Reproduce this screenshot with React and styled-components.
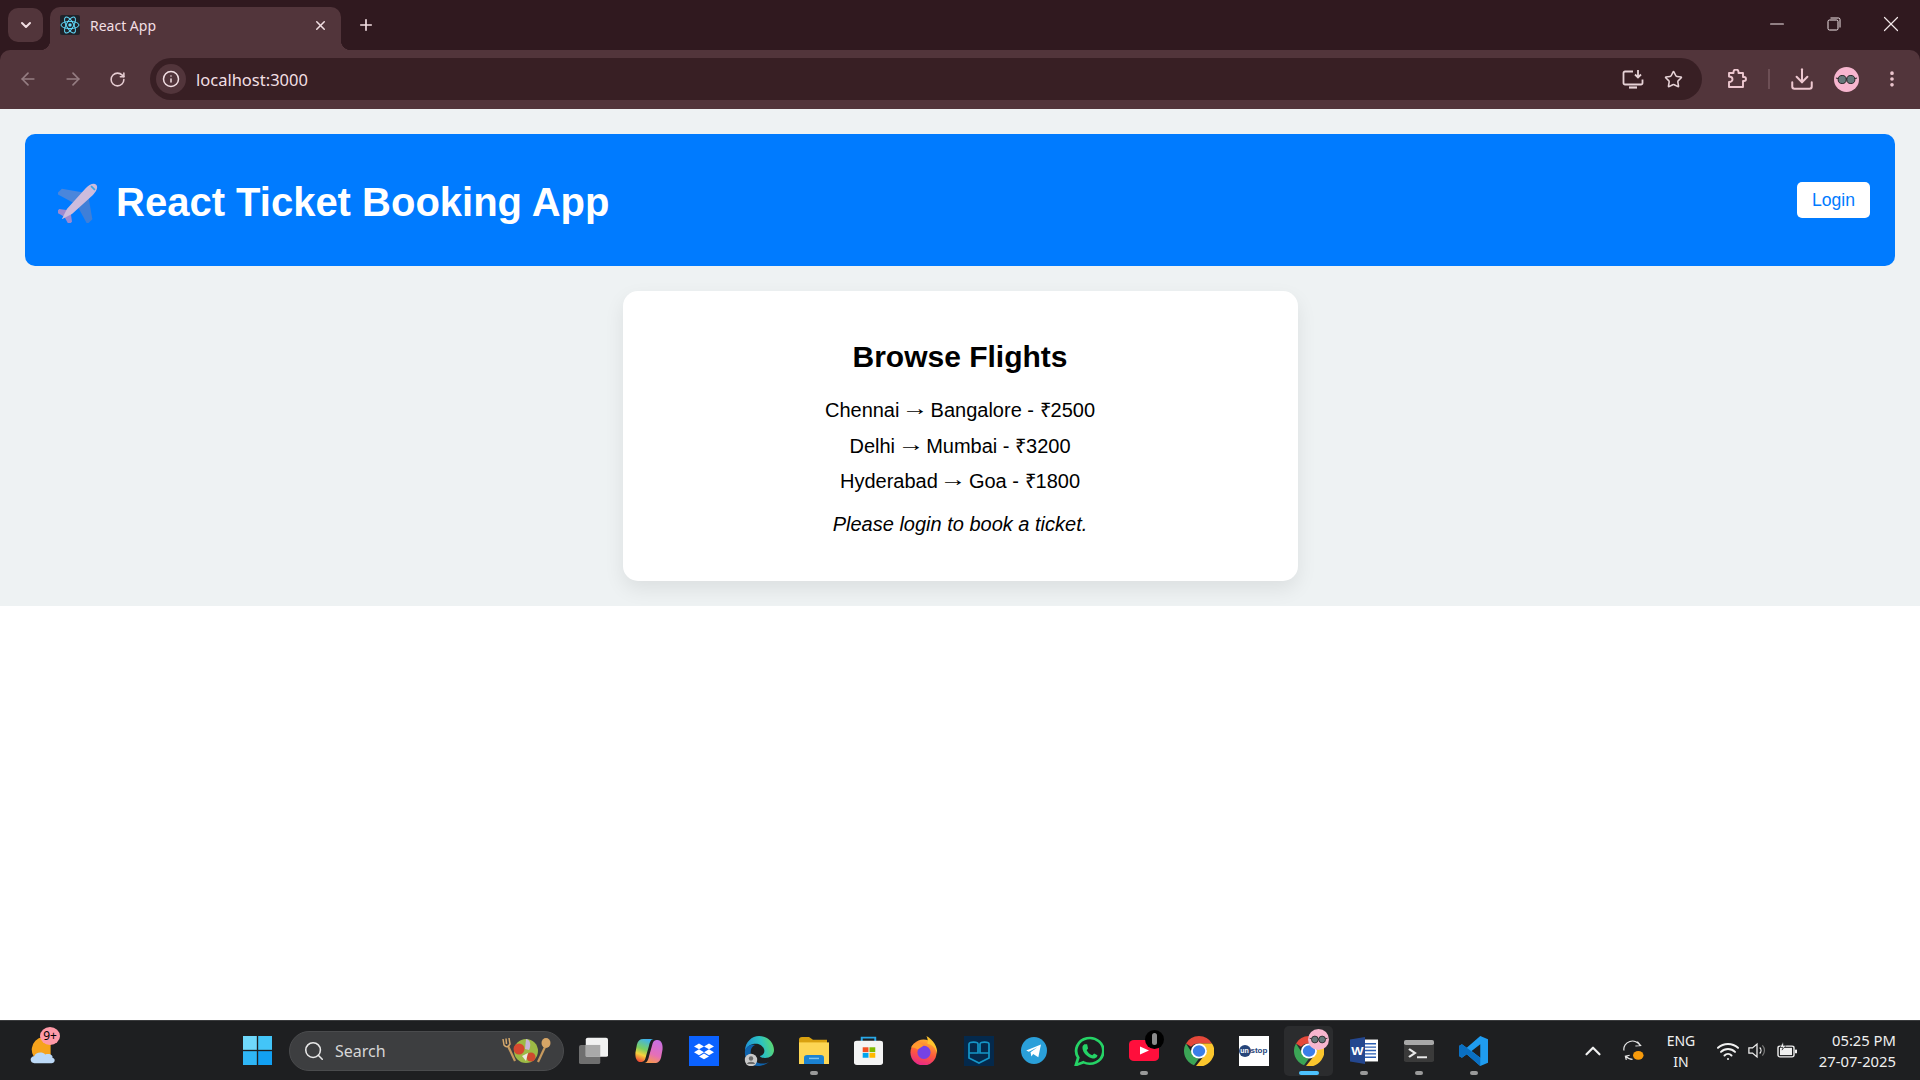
import React from 'react';
import styled, { createGlobalStyle } from 'styled-components';
import {
    ArrowLeft, ArrowRight, RotateCw, Info, Star, Download,
    EllipsisVertical, Minus, X, Plus, ChevronDown, ChevronUp, Search, Wifi,
} from 'lucide-react';

const flights = [
    { from: 'Chennai', to: 'Bangalore', price: '₹2500' },
    { from: 'Delhi', to: 'Mumbai', price: '₹3200' },
    { from: 'Hyderabad', to: 'Goa', price: '₹1800' },
];

const ReactLogo = () => (
    <svg width="20" height="20" viewBox="0 0 20 20" fill="none" stroke="#61dafb" strokeWidth="1">
        <rect width="20" height="20" rx="2" fill="#20232a" stroke="none" />
        <ellipse cx="10" cy="10" rx="9" ry="3.6" />
        <ellipse cx="10" cy="10" rx="9" ry="3.6" transform="rotate(60 10 10)" />
        <ellipse cx="10" cy="10" rx="9" ry="3.6" transform="rotate(120 10 10)" />
        <circle cx="10" cy="10" r="1.7" fill="#61dafb" stroke="none" />
    </svg>
);

const Plane = () => (
    <svg width="42" height="42" viewBox="0 0 42 42">
        <g transform="rotate(45 21 21) translate(21 21) scale(.9) translate(-21 -21)">
            <path d="M17 10 L-3 24 L-3 32 L17 26 Z" fill="#4a86dc" />
            <path d="M25 10 L45 24 L45 32 L25 26 Z" fill="#3f7fd8" />
            <path d="M19 36 L11 42 L11 47 L21 44 L31 47 L31 42 L23 36 Z" fill="#9d8ad0" />
            <path d="M21 -6 C25 -6 26.5 0 26.5 5 L25 36 L21 48 L17 36 L15.5 5 C15.5 0 17 -6 21 -6 Z" fill="#cdbcdd" />
            <path d="M18 -1 L24 -1" stroke="#38a7e8" strokeWidth="1.8" />
        </g>
    </svg>
);

const Avatar = ({ size }) => (
    <svg width={size} height={size} viewBox="0 0 26 26">
        <circle cx="13" cy="13" r="13" fill="#f7b6cf" />
        <circle cx="8.5" cy="13" r="4.2" fill="#66777a" stroke="#222" strokeWidth="1" />
        <circle cx="17.5" cy="13" r="4.2" fill="#66777a" stroke="#222" strokeWidth="1" />
        <path d="M12.5 12.5 h1 M2 11.5 l2.5 .5 M24 11.5 l-2.5 .5" stroke="#222" strokeWidth="1" />
    </svg>
);

const MonitorIcon = () => (
    <svg width="22" height="20" viewBox="0 0 22 20" fill="none" stroke="currentColor" strokeWidth="1.8">
        <path d="M11 2.5 H3 A1.5 1.5 0 0 0 1.5 4 V14 A1.5 1.5 0 0 0 3 15.5 H19 A1.5 1.5 0 0 0 20.5 14 V10.5" />
        <path d="M7 18.5 H15" strokeWidth="2.2" />
        <path d="M16 1 V8.5 M13 5.5 L16 8.5 L19 5.5" />
    </svg>
);

const PuzzleIcon = () => (
    <svg width="20" height="20" viewBox="0 0 20 20" fill="none" stroke="currentColor" strokeWidth="1.9" strokeLinejoin="round">
        <path d="M2 4 H6.5 V3 A2.5 2.5 0 0 1 11.5 3 V4 H16 V8 H17 A2 2 0 0 1 17 12 H16 V18 H2 V13 C4.5 13 5.5 11.5 5.5 10.2 C5.5 9 4.5 7.5 2 7.5 Z" />
    </svg>
);

const WeatherIcon = () => (
    <svg width="27" height="27" viewBox="0 0 30 34" preserveAspectRatio="none">
        <path d="M24 2 A14 16 0 0 0 5 24 L24 24 Z" fill="#f6a31c" />
        <path d="M6 33 C1 33 0 25 6 24 C7 19 15 18 18 22 C23 20 27 23 26 26 C30 27 29 33 25 33 Z" fill="#bcd9f7" />
    </svg>
);

const WindowsIcon = () => (
    <svg width="29" height="29" viewBox="0 0 30 30">
        <rect width="14.3" height="14.3" fill="#6fd8fb" />
        <rect x="15.7" width="14.3" height="14.3" fill="#43c5f8" />
        <rect y="15.7" width="14.3" height="14.3" fill="#2fb6f6" />
        <rect x="15.7" y="15.7" width="14.3" height="14.3" fill="#12a0f3" />
    </svg>
);

const SaladIcon = () => (
    <svg width="50" height="25" viewBox="0 0 50 25">
        <path d="M7 8 L14 23" stroke="#c79a5e" strokeWidth="2.2" />
        <path d="M2 1 L3 7 Q6 11 9 6 L8 0 M5 0.5 L5.5 6" fill="none" stroke="#d3a76c" strokeWidth="1.5" />
        <path d="M44 9 L37 24" stroke="#c79a5e" strokeWidth="2.2" />
        <ellipse cx="45" cy="5" rx="4.5" ry="5" fill="#d6a566" />
        <circle cx="25" cy="13" r="12" fill="#9dba45" />
        <circle cx="18" cy="11" r="5.5" fill="#d5482f" />
        <circle cx="30" cy="19" r="4.5" fill="#cf4a2e" />
        <path d="M25 1 C30 2 30 8 28 12 L24 11 Z" fill="#c7b6d8" />
        <path d="M21 18 L27 15 L25 23 Z" fill="#ece8e0" />
    </svg>
);

const TaskViewIcon = () => (
    <svg width="29" height="27" viewBox="0 0 30 34" preserveAspectRatio="none">
        <rect x="0" y="10" width="22" height="24" rx="2" fill="#6f6f6f" />
        <rect x="7" y="1" width="23" height="24" rx="2" fill="#f1f1f1" />
        <rect x="7" y="10" width="15" height="15" fill="#a9a9a9" />
    </svg>
);

const CopilotIcon = () => (
    <svg width="28" height="26" viewBox="0 0 30 27" preserveAspectRatio="none">
        <defs>
            <linearGradient id="copilotLeft" x1="0.6" y1="0" x2="0.3" y2="1">
                <stop offset="0" stopColor="#3fb2ec" />
                <stop offset="0.45" stopColor="#7ccf5e" />
                <stop offset="0.7" stopColor="#f6d23d" />
                <stop offset="1" stopColor="#ee4a36" />
            </linearGradient>
            <linearGradient id="copilotRight" x1="0.6" y1="0" x2="0.3" y2="1">
                <stop offset="0" stopColor="#c86fe0" />
                <stop offset="0.6" stopColor="#e56fb8" />
                <stop offset="1" stopColor="#f79a4c" />
            </linearGradient>
        </defs>
        <path d="M9 1 C5 1 3 3 2 7 L.5 15 C0 20 1.5 25 6 25 C9 25 10.5 24 11.5 20 L15 8 C16 4 17 1 20 1 Z" fill="url(#copilotLeft)" />
        <path d="M21 26 C25 26 27 24 28 20 L29.5 12 C30 7 28.5 2 24 2 C21 2 19.5 3 18.5 7 L15 19 C14 23 13 26 10 26 Z" fill="url(#copilotRight)" />
    </svg>
);

const DropboxIcon = () => (
    <svg width="30" height="30" viewBox="0 0 30 36" preserveAspectRatio="none">
        <rect width="30" height="36" fill="#0b62ff" />
        <path d="M10 9 L15 12.5 L10 16 L5 12.5 Z M20 9 L25 12.5 L20 16 L15 12.5 Z M10 16 L15 19.5 L10 23 L5 19.5 Z M20 16 L25 19.5 L20 23 L15 19.5 Z M15 21 L20 24.5 L15 28 L10 24.5 Z" fill="#fff" />
    </svg>
);

const EdgeIcon = () => (
    <svg width="30" height="30" viewBox="0 0 30 30">
        <defs>
            <linearGradient id="edgeTop" x1="0" y1="0.6" x2="1" y2="0.4">
                <stop offset="0" stopColor="#1f8fd8" />
                <stop offset="0.6" stopColor="#2cc3c0" />
                <stop offset="1" stopColor="#5fd86c" />
            </linearGradient>
        </defs>
        <path d="M1 15 C1 6 8 0 15 0 C24 0 30 7 30 14 C30 19 26 22 21 22 C18 22 16 21 16 20 C20 19 21 16 20 13 C18 8 13 7 9 8 C5 9 2 12 1 15 Z" fill="url(#edgeTop)" />
        <path d="M1 15 C2 10 7 8 11 9 C7 11 6 15 7 19 C9 26 17 30 25 26 C21 29 17 30 14 30 C6 30 0 24 1 15 Z" fill="#0f63ad" />
        <circle cx="7" cy="24" r="6.2" fill="#c9c9c9" />
        <circle cx="7" cy="22.5" r="2.2" fill="#6a6a6a" />
        <path d="M3 28 C3.5 25 10.5 25 11 28 Z" fill="#6a6a6a" />
    </svg>
);

const FolderIcon = () => (
    <svg width="30" height="27" viewBox="0 0 30 30" preserveAspectRatio="none">
        <path d="M0 3 C0 1 1 0 3 0 L10 0 L14 3 L28 3 L28 8 L0 8 Z" fill="#d9a10f" />
        <rect y="6" width="30" height="24" fill="#fdd654" />
        <path d="M5 30 L5 23 C5 21 6 20 8 20 L22 20 C24 20 25 21 25 23 L25 30 Z" fill="#1b82d2" />
        <rect x="10" y="23" width="10" height="1.6" fill="#7fc4f0" />
    </svg>
);

const StoreIcon = () => (
    <svg width="29" height="29" viewBox="0 0 30 36" preserveAspectRatio="none">
        <path d="M8 8 V2 H22 V8" fill="none" stroke="#29a8e8" strokeWidth="2" />
        <rect y="6" width="30" height="30" rx="3" fill="#f4f4f4" />
        <rect x="9" y="14" width="6" height="6" fill="#f25022" />
        <rect x="16" y="14" width="6" height="6" fill="#7fba00" />
        <rect x="9" y="21" width="6" height="6" fill="#00a4ef" />
        <rect x="16" y="21" width="6" height="6" fill="#ffb900" />
    </svg>
);

const FirefoxIcon = () => (
    <svg width="29" height="29" viewBox="0 0 30 30">
        <defs>
            <linearGradient id="foxBody" x1="0.7" y1="0" x2="0.4" y2="1">
                <stop offset="0" stopColor="#ffb52e" />
                <stop offset="0.55" stopColor="#ff5a3c" />
                <stop offset="1" stopColor="#e8268a" />
            </linearGradient>
        </defs>
        <circle cx="15" cy="17" r="13.5" fill="url(#foxBody)" />
        <path d="M18 0 C25 4 30 11 29 19 C28 12 24 9 19 8 C20 5 19 2 18 0 Z" fill="#ffc42e" />
        <circle cx="15.5" cy="17" r="6.8" fill="#7542e5" />
        <path d="M2 12 C5 6 11 6 15 10 L9 14 C6 12 4 12 2 12 Z" fill="#ff9a2e" />
    </svg>
);

const PwIcon = () => (
    <svg width="30" height="30" viewBox="0 0 30 30">
        <rect width="30" height="30" fill="#04294c" />
        <path d="M5 17 V8 C5 5.5 14 5.5 14 8 V17 H5 V22 L15 27 L25 22 V17 H16 V8 C16 5.5 25 5.5 25 8 V17" fill="none" stroke="#1596c8" strokeWidth="1.7" />
    </svg>
);

const TelegramIcon = () => (
    <svg width="26" height="27" viewBox="0 0 30 32" preserveAspectRatio="none">
        <ellipse cx="15" cy="16" rx="15" ry="16" fill="#2a9fd9" />
        <path d="M6 16 L23 9 L20 24 L14 20 L12 23 L11 18 L19 12 L9 17.5 Z" fill="#fff" />
    </svg>
);

const WhatsappIcon = () => (
    <svg width="30" height="30" viewBox="0 0 32 36" preserveAspectRatio="none">
        <path d="M2 35 L4.5 26 A14.5 15.5 0 1 1 10 31.5 Z" fill="none" stroke="#25d366" strokeWidth="3" />
        <path d="M11 10 L14 10 L15 15 L13.5 17 C15 20 17 22 19.5 23 L21.5 21 L25 23 C25 26 22 27 20 27 C15 26 9 20 9 14 C9 12 10 11 11 10 Z" fill="#25d366" />
    </svg>
);

const YoutubeIcon = () => (
    <svg width="30" height="21" viewBox="0 0 30 26" preserveAspectRatio="none">
        <rect width="30" height="26" rx="5" fill="#ff0f3c" />
        <path d="M11 8 L20 13 L11 18 Z" fill="#fff" />
    </svg>
);

const ChromeIcon = () => (
    <svg width="30" height="30" viewBox="0 0 30 36" preserveAspectRatio="none">
        <path d="M15 0 A15 18 0 0 1 28 9 L15 9 A9 9 0 0 0 7 13 L2 9 A15 18 0 0 1 15 0 Z" fill="#e5483a" />
        <path d="M2 9 L8 20 A8 8 0 0 0 15 27 L10 35 A15 18 0 0 1 2 9 Z" fill="#3ba556" />
        <path d="M28 9 A15 18 0 0 1 12 36 L20 24 A8 8 0 0 0 21 13 L15 9 Z" fill="#fbc62d" />
        <ellipse cx="15" cy="18" rx="8" ry="9" fill="#fff" />
        <ellipse cx="15" cy="18" rx="6.2" ry="7" fill="#3a7ee8" />
    </svg>
);

const WordIcon = () => (
    <svg width="28" height="27" viewBox="0 0 28 32" preserveAspectRatio="none">
        <rect x="8" y="3" width="20" height="26" fill="#fff" />
        <path d="M15 8 H26 M15 12 H26 M15 16 H26 M15 20 H26 M15 24 H26" stroke="#2b5fb3" strokeWidth="1.6" />
        <path d="M0 3 L15 0 V32 L0 29 Z" fill="#24478f" />
        <text x="7.5" y="21" fontSize="13" fontWeight="700" fill="#fff" textAnchor="middle" fontFamily="Liberation Sans, sans-serif">W</text>
    </svg>
);

const TerminalIcon = () => (
    <svg width="30" height="22" viewBox="0 0 30 27" preserveAspectRatio="none">
        <rect width="30" height="27" rx="2" fill="#3a3a3a" />
        <rect width="30" height="6" rx="2" fill="#a8a8a8" />
        <path d="M5 11 L11 16 L5 21" fill="none" stroke="#e8e8e8" strokeWidth="2.4" />
        <rect x="13" y="20" width="10" height="2.4" fill="#e8e8e8" />
    </svg>
);

const VscodeIcon = () => (
    <svg width="29" height="30" viewBox="0 0 30 36" preserveAspectRatio="none">
        <path d="M22 0 L30 4 V32 L22 36 L8 22 L3 26 L0 24 V12 L3 10 L8 14 Z M22 10 L13 18 L22 26 Z" fill="#1f9cf0" />
        <path d="M0 12 L3 10 L22 26 V36 L8 22 L3 26 L0 24 Z" fill="#0a6fc2" />
    </svg>
);

const SyncIcon = () => (
    <svg width="21" height="21" viewBox="0 0 22 26" fill="none" stroke="#e6e6e6" strokeWidth="1.3" preserveAspectRatio="none">
        <path d="M1 13 A9 10 0 0 1 18 7 M15 2 L18.5 7 L13 7.5" />
        <path d="M10 24 A9 10 0 0 1 3 20 M7 19 L2.5 20 L3.5 24.5" />
        <circle cx="16" cy="19" r="5.5" fill="#f79a0b" stroke="none" />
    </svg>
);

const SpeakerIcon = () => (
    <svg width="18" height="17" viewBox="0 0 20 20" fill="none" stroke="#f0f0f0" strokeWidth="1.4" preserveAspectRatio="none">
        <path d="M1 7 H5 L10 2.5 V17.5 L5 13 H1 Z" />
        <path d="M13 6.5 A5 5 0 0 1 13 13.5" />
        <path d="M16 4 A9 9 0 0 1 16 16" stroke="#777" />
    </svg>
);

const BatteryIcon = () => (
    <svg width="20" height="18" viewBox="0 0 20 20" preserveAspectRatio="none">
        <rect x="1" y="4.5" width="16" height="12" rx="2" fill="none" stroke="#f0f0f0" strokeWidth="1.4" />
        <rect x="3" y="6.5" width="12" height="8" fill="#f0f0f0" />
        <rect x="18" y="8.5" width="2" height="4" fill="#f0f0f0" />
        <path d="M6 0 L3 6 H6 L5 9 L9 4 H6.5 Z" fill="#f0f0f0" stroke="#1e1f21" strokeWidth=".6" />
    </svg>
);

const UnstopIcon = () => (
    <UnstopTile>
        <UnstopMark>un</UnstopMark>stop
    </UnstopTile>
);

const apps = [
    { Icon: TaskViewIcon },
    { Icon: CopilotIcon },
    { Icon: DropboxIcon },
    { Icon: EdgeIcon },
    { Icon: FolderIcon, running: true },
    { Icon: StoreIcon },
    { Icon: FirefoxIcon },
    { Icon: PwIcon },
    { Icon: TelegramIcon },
    { Icon: WhatsappIcon },
    { Icon: YoutubeIcon, running: true, notify: true },
    { Icon: ChromeIcon },
    { Icon: UnstopIcon },
    { Icon: ChromeIcon, active: true },
    { Icon: WordIcon, running: true },
    { Icon: TerminalIcon, running: true },
    { Icon: VscodeIcon, running: true },
];

function App() {
    return (
        <>
            <GlobalStyle />
            <Screen>
                <Browser>
                    <TabStrip>
                        <TabSearch><ChevronDown size={16} strokeWidth={3} /></TabSearch>
                        <Tab>
                            <ReactLogo />
                            <TabTitle>React App</TabTitle>
                            <TabClose><X size={15} strokeWidth={2.4} /></TabClose>
                        </Tab>
                        <NewTab><Plus size={18} strokeWidth={2.2} /></NewTab>
                        <WindowControls>
                            <WindowButton><Minus size={22} strokeWidth={1.2} /></WindowButton>
                            <WindowButton>
                                <svg width="14" height="14" viewBox="0 0 14 14" fill="none" stroke="#f2e7e9" strokeWidth="1">
                                    <rect x="1" y="3" width="10" height="10" rx="1.5" />
                                    <path d="M3.5 1 H11.5 A1.5 1.5 0 0 1 13 2.5 V10.5" />
                                </svg>
                            </WindowButton>
                            <WindowButton><X size={26} strokeWidth={1.1} /></WindowButton>
                        </WindowControls>
                    </TabStrip>
                    <Toolbar>
                        <NavButton $dim><ArrowLeft size={20} /></NavButton>
                        <NavButton $dim><ArrowRight size={20} /></NavButton>
                        <NavButton><RotateCw size={17} strokeWidth={2.2} /></NavButton>
                        <Omnibox>
                            <InfoChip><Info size={18} /></InfoChip>
                            <Url>localhost:3000</Url>
                            <OmniAction><MonitorIcon /></OmniAction>
                            <OmniAction><Star size={19} strokeWidth={2} /></OmniAction>
                        </Omnibox>
                        <ToolButton><PuzzleIcon /></ToolButton>
                        <ToolDivider />
                        <ToolButton><Download size={26} strokeWidth={1.85} /></ToolButton>
                        <ToolButton><Avatar size={25} /></ToolButton>
                        <ToolButton><EllipsisVertical size={20} strokeWidth={2.4} /></ToolButton>
                    </Toolbar>
                </Browser>

                <Viewport>
                    <Site>
                        <Header>
                            <Title><Plane /> React Ticket Booking App</Title>
                            <LoginButton>Login</LoginButton>
                        </Header>
                        <Card>
                            <CardTitle>Browse Flights</CardTitle>
                            {flights.map(item => (
                                <Flight key={item.from}>
                                    {item.from} <Arrow>→</Arrow> {item.to} - {item.price}
                                </Flight>
                            ))}
                            <Hint>Please login to book a ticket.</Hint>
                        </Card>
                    </Site>
                </Viewport>

                <Taskbar>
                    <Weather>
                        <WeatherIcon />
                        <WeatherBadge>9+</WeatherBadge>
                    </Weather>
                    <AppSlot><WindowsIcon /></AppSlot>
                    <SearchBox>
                        <Search size={22} strokeWidth={1.7} color="#e8e8e8" />
                        <SearchLabel>Search</SearchLabel>
                        <SaladIcon />
                    </SearchBox>
                    <Apps>
                        {apps.map((app, i) => (
                            <AppSlot key={i} $active={app.active}>
                                <app.Icon />
                                {app.notify && <NotifyDot />}
                                {app.active && <AvatarBadge><Avatar size={21} /></AvatarBadge>}
                                {(app.running || app.active) && <Running $active={app.active} />}
                            </AppSlot>
                        ))}
                    </Apps>
                    <Tray>
                        <TraySlot $w={40}><ChevronUp size={26} strokeWidth={2} /></TraySlot>
                        <TraySlot $w={40}><SyncIcon /></TraySlot>
                        <Lang><span>ENG</span><span>IN</span></Lang>
                        <TraySlot $w={29}><Wifi size={24} strokeWidth={2} /></TraySlot>
                        <TraySlot $w={29}><SpeakerIcon /></TraySlot>
                        <TraySlot $w={32}><BatteryIcon /></TraySlot>
                        <Clock><span>05:25 PM</span><span>27-07-2025</span></Clock>
                    </Tray>
                </Taskbar>
            </Screen>
        </>
    );
}

export default App;

const GlobalStyle = createGlobalStyle`
    * {
        box-sizing: border-box;
    }

    body {
        margin: 0;
        background: #fff;
        font-family: "Liberation Sans", Arial, sans-serif;
    }
`;

const Screen = styled.div`
    display: flex;
    flex-direction: column;
    width: 1920px;
    height: 1080px;
    overflow: hidden;
`;

const Browser = styled.div`
    background-color: #30191f;
    font-family: "Noto Sans", sans-serif;
    color: #f2dfe3;
`;

const TabStrip = styled.div`
    display: flex;
    align-items: flex-end;
    height: 50px;
    padding-left: 8px;
`;

const TabSearch = styled.div`
    display: flex;
    align-items: center;
    justify-content: center;
    align-self: flex-start;
    width: 35px;
    height: 34px;
    margin-top: 8px;
    border-radius: 10px;
    background-color: #52353b;
`;

const Tab = styled.div`
    position: relative;
    display: flex;
    align-items: center;
    width: 291px;
    height: 43px;
    margin-left: 7px;
    padding: 0 13px 7px 10px;
    border-radius: 10px 10px 0 0;
    background-color: #52353b;

    &::before,
    &::after {
        content: '';
        position: absolute;
        bottom: 0;
        width: 10px;
        height: 10px;
    }

    &::before {
        left: -10px;
        background: radial-gradient(circle at 0 0, transparent 10px, #52353b 10.5px);
    }

    &::after {
        right: -10px;
        background: radial-gradient(circle at 100% 0, transparent 10px, #52353b 10.5px);
    }
`;

const TabTitle = styled.span`
    flex: 1;
    margin-left: 10px;
    font-size: 14px;
`;

const TabClose = styled.span`
    display: flex;
`;

const NewTab = styled.div`
    display: flex;
    align-self: flex-start;
    margin: 16px 0 0 16px;
`;

const WindowControls = styled.div`
    display: flex;
    align-self: flex-start;
    margin-left: auto;
    padding-right: 1px;
`;

const WindowButton = styled.div`
    display: flex;
    align-items: center;
    justify-content: center;
    width: 57px;
    height: 48px;
    color: #f2e7e9;
`;

const Toolbar = styled.div`
    display: flex;
    align-items: center;
    height: 59px;
    padding: 0 6px 1px 5px;
    border-radius: 10px 10px 0 0;
    background-color: #52353b;
`;

const NavButton = styled.div`
    display: flex;
    align-items: center;
    justify-content: center;
    width: 45px;
    height: 36px;
    color: ${props => props.$dim ? '#957d82' : '#e6cdd2'};
`;

const Omnibox = styled.div`
    display: flex;
    align-items: center;
    flex: 1;
    height: 42px;
    margin: 0 12px 0 10px;
    padding: 0 8px 0 6px;
    border-radius: 21px;
    background-color: #381f24;
`;

const InfoChip = styled.div`
    display: flex;
    align-items: center;
    justify-content: center;
    width: 30px;
    height: 30px;
    border-radius: 50%;
    background-color: #52353b;
    color: #f2dfe3;
`;

const Url = styled.span`
    flex: 1;
    margin-left: 10px;
    font-size: 16.5px;
`;

const OmniAction = styled.div`
    display: flex;
    align-items: center;
    justify-content: center;
    width: 41px;
    color: #e6d2d6;
`;

const ToolButton = styled.div`
    display: flex;
    align-items: center;
    justify-content: center;
    width: 45px;
    height: 36px;
    color: #edc7cf;
`;

const ToolDivider = styled.div`
    width: 2px;
    height: 20px;
    margin: 0 9px;
    background-color: #6d4f55;
`;

const Viewport = styled.main`
    flex: 1;
    background-color: #fff;
`;

const Site = styled.div`
    padding: 25px;
    background-color: #eef2f3;
`;

const Header = styled.header`
    display: flex;
    align-items: center;
    justify-content: space-between;
    height: 132px;
    padding: 0 25px 0 33px;
    border-radius: 10px;
    background-color: #007bff;
    color: #fff;
`;

const Title = styled.h1`
    display: flex;
    align-items: center;
    gap: 16px;
    margin: 4px 0 0;
    font-size: 40px;
`;

const LoginButton = styled.button`
    height: 36px;
    padding: 0 15px;
    border: none;
    border-radius: 5px;
    background-color: #fff;
    color: #007bff;
    font-family: inherit;
    font-size: 17.6px;
    cursor: pointer;
`;

const Card = styled.section`
    width: 675px;
    height: 290px;
    margin: 25px auto 0;
    padding: 48px 30px 0;
    border-radius: 15px;
    background-color: #fff;
    box-shadow: 0 8px 20px rgba(0, 0, 0, .08);
    text-align: center;
    color: #000;
`;

const CardTitle = styled.h2`
    margin: 0 0 18px;
    font-size: 30px;
    line-height: 36px;
`;

const Flight = styled.p`
    margin: 0;
    font-size: 20px;
    line-height: 35.5px;
`;

const Arrow = styled.span`
    display: inline-block;
    transform: translateY(-2px) scaleX(1.35);
`;

const Hint = styled.p`
    margin: 7px 0 0;
    font-size: 20px;
    line-height: 34px;
    font-style: italic;
`;

const Taskbar = styled.footer`
    display: flex;
    align-items: center;
    height: 60px;
    border-top: 1px solid #3a3b3d;
    background-color: #1e1f21;
    font-family: "Noto Sans", sans-serif;
    color: #f0f0f0;
`;

const Weather = styled.div`
    position: relative;
    display: flex;
    width: 27px;
    margin: 0 174px 0 29px;
`;

const WeatherBadge = styled.span`
    position: absolute;
    top: -10px;
    right: -4px;
    width: 20px;
    height: 18px;
    border-radius: 50%;
    background-color: #ff9aa8;
    color: #000;
    font-size: 12px;
    line-height: 18px;
    text-align: center;
`;

const AppSlot = styled.div`
    position: relative;
    display: flex;
    align-items: center;
    justify-content: center;
    width: 55px;
    height: 50px;

    ${props => props.$active && `
        &::before {
            content: '';
            position: absolute;
            inset: 0 3px;
            border-radius: 5px;
            background-color: #2b2c2e;
        }

        & > svg {
            position: relative;
        }
    `}
`;

const Running = styled.span`
    position: absolute;
    bottom: 1px;
    left: 50%;
    width: ${props => props.$active ? '20px' : '8px'};
    height: 4px;
    border-radius: 2px;
    transform: translateX(-50%);
    background-color: ${props => props.$active ? '#4cc2ff' : '#9a9a9a'};
`;

const NotifyDot = styled.span`
    position: absolute;
    top: 4px;
    right: 7px;
    display: flex;
    align-items: center;
    justify-content: center;
    width: 19px;
    height: 19px;
    border-radius: 50%;
    background-color: #000;

    &::after {
        content: '';
        width: 5px;
        height: 12px;
        border-radius: 3px;
        background-color: #8b8b8b;
    }
`;

const AvatarBadge = styled.span`
    position: absolute;
    top: 3px;
    right: 7px;
    display: flex;
`;

const UnstopTile = styled.div`
    display: flex;
    align-items: center;
    width: 30px;
    height: 30px;
    background-color: #fff;
    color: #26457a;
    font-family: "Liberation Sans", sans-serif;
    font-size: 8px;
    font-weight: 700;
`;

const UnstopMark = styled.span`
    flex: none;
    width: 12px;
    height: 12px;
    border-radius: 50%;
    background-color: #26457a;
    color: #fff;
    font-size: 7px;
    line-height: 12px;
    text-align: center;
`;

const SearchBox = styled.div`
    display: flex;
    align-items: center;
    width: 275px;
    height: 40px;
    margin: 0 2px 0 4px;
    padding: 0 12px 0 13px;
    border: 1px solid #4a4b4d;
    border-radius: 20px;
    background-color: #3d3e40;
`;

const SearchLabel = styled.span`
    flex: 1;
    margin-left: 10px;
    color: #d6d6d6;
    font-size: 16px;
`;

const Apps = styled.div`
    display: flex;
    align-items: center;
`;

const Tray = styled.div`
    display: flex;
    align-items: center;
    margin-left: auto;
    padding-right: 24px;
`;

const TraySlot = styled.div`
    display: flex;
    align-items: center;
    justify-content: center;
    width: ${props => props.$w}px;
`;

const Lang = styled.div`
    display: flex;
    flex-direction: column;
    align-items: center;
    width: 56px;
    margin-right: 4px;
    font-size: 14px;
    line-height: 21px;
`;

const Clock = styled.div`
    display: flex;
    flex-direction: column;
    align-items: flex-end;
    width: 93px;
    font-size: 14.8px;
    line-height: 21px;
`;
